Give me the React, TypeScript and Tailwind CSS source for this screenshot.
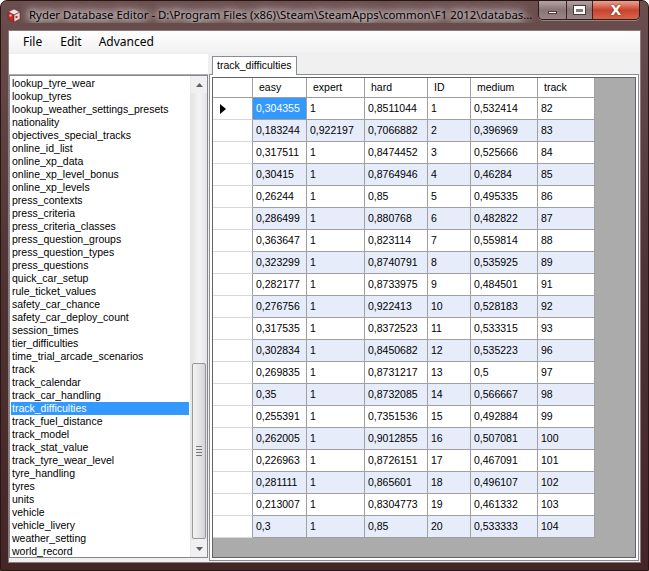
import React from "react";

const items = [
  "lookup_tyre_wear","lookup_tyres","lookup_weather_settings_presets","nationality","objectives_special_tracks",
  "online_id_list","online_xp_data","online_xp_level_bonus","online_xp_levels","press_contexts","press_criteria",
  "press_criteria_classes","press_question_groups","press_question_types","press_questions","quick_car_setup",
  "rule_ticket_values","safety_car_chance","safety_car_deploy_count","session_times","tier_difficulties",
  "time_trial_arcade_scenarios","track","track_calendar","track_car_handling","track_difficulties",
  "track_fuel_distance","track_model","track_stat_value","track_tyre_wear_level","tyre_handling","tyres","units",
  "vehicle","vehicle_livery","weather_setting","world_record",
];

const rows = [
  ["0,304355","1","0,8511044","1","0,532414","82"],
  ["0,183244","0,922197","0,7066882","2","0,396969","83"],
  ["0,317511","1","0,8474452","3","0,525666","84"],
  ["0,30415","1","0,8764946","4","0,46284","85"],
  ["0,26244","1","0,85","5","0,495335","86"],
  ["0,286499","1","0,880768","6","0,482822","87"],
  ["0,363647","1","0,823114","7","0,559814","88"],
  ["0,323299","1","0,8740791","8","0,535925","89"],
  ["0,282177","1","0,8733975","9","0,484501","91"],
  ["0,276756","1","0,922413","10","0,528183","92"],
  ["0,317535","1","0,8372523","11","0,533315","93"],
  ["0,302834","1","0,8450682","12","0,535223","96"],
  ["0,269835","1","0,8731217","13","0,5","97"],
  ["0,35","1","0,8732085","14","0,566667","98"],
  ["0,255391","1","0,7351536","15","0,492884","99"],
  ["0,262005","1","0,9012855","16","0,507081","100"],
  ["0,226963","1","0,8726151","17","0,467091","101"],
  ["0,281111","1","0,865601","18","0,496107","102"],
  ["0,213007","1","0,8304773","19","0,461332","103"],
  ["0,3","1","0,85","20","0,533333","104"],
];

const cols = [
  { name: "easy", w: "w-[54px]" },
  { name: "expert", w: "w-[58px]" },
  { name: "hard", w: "w-[63px]" },
  { name: "ID", w: "w-[43px]" },
  { name: "medium", w: "w-[67px]" },
  { name: "track", w: "w-[57px]" },
];

const glow = {
  textShadow:
    "0 0 6px rgba(255,255,255,1), 0 0 10px rgba(255,255,255,0.95), 0 0 14px rgba(255,255,255,0.8), 0 0 18px rgba(255,255,255,0.6)",
};

function AppIcon() {
  return (
    <svg width="14" height="15" viewBox="0 0 14 15">
      <polygon points="7,1 13,4 7,7 1,4" fill="#f2e4e4" stroke="#6a2a2a" strokeWidth="0.6" />
      <polygon points="1,4 7,7 7,14 1,11" fill="#c8262b" stroke="#6a2a2a" strokeWidth="0.6" />
      <polygon points="7,7 13,4 13,11 7,14" fill="#e9d9d9" stroke="#6a2a2a" strokeWidth="0.6" />
      <rect x="8.5" y="8" width="2" height="2" fill="#c8262b" />
      <rect x="2.5" y="6.5" width="2" height="2" fill="#f5c5c5" />
    </svg>
  );
}

export default function App() {
  return (
    <div className="w-[649px] h-[571px] bg-white overflow-hidden">
      <div className="w-[649px] h-[571px] rounded-t-[7px] bg-gradient-to-b from-[#6b4f4f] via-[#4f3232] to-[#442626] border border-[#2a1515] flex flex-col">
        {/* Title bar */}
        <div className="h-[29px] flex items-start shrink-0">
          <div className="pl-[6px] pt-[7px]">
            <AppIcon />
          </div>
          <div
            className="flex-1 pl-[8px] pt-[6px] text-[11.4px] leading-[16px] text-black whitespace-nowrap overflow-hidden font-['Noto_Sans',sans-serif]"
            style={glow}
          >
            Ryder Database Editor - D:\Program Files (x86)\Steam\SteamApps\common\F1 2012\databas...
          </div>
          <div className="flex mr-[8px] h-[19px] rounded-b-[5px] border border-t-0 border-[#2e1c1c] overflow-hidden shadow-[0_1px_0_rgba(255,255,255,0.3)]">
            <div className="w-[28px] h-full bg-gradient-to-b from-[#b5a3a3] via-[#8a7474] to-[#9a8686] border-r border-[#3a2626] flex items-center justify-center">
              <div className="w-[9px] h-[3px] bg-white mt-[5px] border border-[#4a3a3a]" />
            </div>
            <div className="w-[26px] h-full bg-gradient-to-b from-[#b5a3a3] via-[#8a7474] to-[#9a8686] border-r border-[#3a2626] flex items-center justify-center">
              <div className="w-[11px] h-[8px] border-[2px] border-white border-t-[3px] outline outline-1 outline-[#4a3a3a]" />
            </div>
            <div className="w-[46px] h-full bg-gradient-to-b from-[#e9a293] via-[#c8432c] to-[#d8644c] flex items-center justify-center">
              <span className="text-white font-bold text-[14px] leading-none font-['DejaVu_Sans',sans-serif] [text-shadow:0_0_2px_#5a1a10]">X</span>
            </div>
          </div>
        </div>

        {/* Client area */}
        <div className="flex-1 mx-[7px] mb-[7px] mt-[0px] bg-[#f0f0f0] border border-[#8e7a7a] flex flex-col overflow-hidden font-['Liberation_Sans',Arial,sans-serif] text-[10.5px] text-black">
          {/* Menu */}
          <div className="h-[22px] shrink-0 bg-gradient-to-b from-[#fdfdfd] to-[#f3f3f3] flex items-center text-[12px] font-['Noto_Sans',sans-serif] border-b border-[#f0f0f0]">
            <span className="ml-[14px]">File</span>
            <span className="ml-[18px]">Edit</span>
            <span className="ml-[17px]">Advanced</span>
          </div>

          <div className="flex-1 flex min-h-0">
            {/* Left column */}
            <div className="w-[199px] flex flex-col pb-[4px]">
              <div className="h-[21px] mt-[1px] bg-white border-b border-[#abadb3]" />
              <div className="flex-1 min-h-0 border border-[#828790] bg-white flex overflow-hidden">
                <div className="flex-1 pt-[1px] px-[1px] overflow-hidden">
                  {items.map((it) => (
                    <div
                      key={it}
                      className={
                        "h-[13px] leading-[13px] pl-[1px] whitespace-nowrap " +
                        (it === "track_difficulties" ? "bg-[#3399ff] text-white" : "")
                      }
                    >
                      {it}
                    </div>
                  ))}
                </div>
                {/* Scrollbar */}
                <div className="w-[17px] flex flex-col bg-[#f0f0f0] border-l border-[#e8e8e8]">
                  <div className="h-[17px] flex items-center justify-center">
                    <svg width="7" height="4" viewBox="0 0 7 4">
                      <polygon points="0,4 3.5,0 7,4" fill="#606060" />
                    </svg>
                  </div>
                  <div className="flex-1 flex flex-col justify-end px-[1px] bg-gradient-to-r from-[#e4e4e4] via-[#f4f4f4] to-[#e4e4e4]">
                    <div className="h-[176px] mb-[1px] rounded-[2px] border border-[#999] bg-gradient-to-r from-[#f2f2f2] via-[#e6e6e6] to-[#d4d4d4] flex flex-col items-center justify-center gap-[2px]">
                      <div className="w-[6px] h-[1px] bg-[#777]" />
                      <div className="w-[6px] h-[1px] bg-[#777]" />
                      <div className="w-[6px] h-[1px] bg-[#777]" />
                      <div className="w-[6px] h-[1px] bg-[#777]" />
                    </div>
                  </div>
                  <div className="h-[17px] flex items-center justify-center">
                    <svg width="7" height="4" viewBox="0 0 7 4">
                      <polygon points="0,0 7,0 3.5,4" fill="#606060" />
                    </svg>
                  </div>
                </div>
              </div>
            </div>

            {/* Right: tab control */}
            <div className="flex-1 flex flex-col pl-[1px] pr-[1px] pb-[1px]">
              <div className="h-[21px] shrink-0 flex items-end pl-[3px]">
                <div className="h-[19px] px-[4px] bg-white border border-b-0 border-[#898c95] leading-[17px] -mb-[1px] relative z-10">
                  track_difficulties
                </div>
              </div>
              <div className="flex-1 min-h-0 border border-[#898c95] bg-white p-[2px] pb-[2px] flex">
                <div className="flex-1 border border-[#646464] bg-[#ababab] overflow-hidden">
                  {/* Header */}
                  <div className="flex h-[20px]">
                    <div className="w-[40px] h-full bg-white border-r border-b border-[#a0a0a0]" />
                    {cols.map((c) => (
                      <div
                        key={c.name}
                        className={c.w + " h-full bg-white border-r border-b border-[#a0a0a0] pl-[6px] leading-[19px]"}
                      >
                        {c.name}
                      </div>
                    ))}
                  </div>
                  {rows.map((r, i) => {
                    const alt = i % 2 === 1;
                    return (
                      <div key={i} className="flex h-[22px]">
                        <div className="w-[40px] h-full bg-white border-r border-r-[#a0a0a0] border-b border-b-[#d8d8d8] flex items-center pl-[7px]">
                          {i === 0 && (
                            <svg width="6" height="10" viewBox="0 0 6 10">
                              <polygon points="0,0 6,5 0,10" fill="#000" />
                            </svg>
                          )}
                        </div>
                        {r.map((v, j) => {
                          const sel = i === 0 && j === 0;
                          return (
                            <div
                              key={j}
                              className={
                                cols[j].w +
                                " h-full border-r border-b border-[#a0a0a0] pl-[3px] leading-[21px] whitespace-nowrap overflow-hidden " +
                                (sel ? "bg-[#3399ff] text-white" : alt ? "bg-[#e6ecfa]" : "bg-white")
                              }
                            >
                              {v}
                            </div>
                          );
                        })}
                      </div>
                    );
                  })}
                </div>
              </div>
            </div>
          </div>
        </div>
      </div>
    </div>
  );
}
